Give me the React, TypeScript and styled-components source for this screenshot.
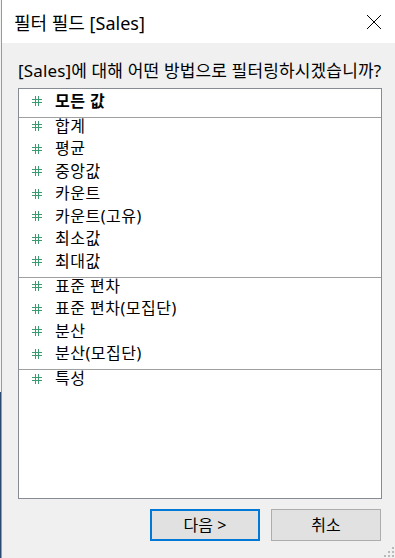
import React from 'react';
import styled, { createGlobalStyle } from 'styled-components';

const GlobalStyle = createGlobalStyle`
  html, body {
    margin: 0;
    padding: 0;
    background: #f0f0f0;
  }
  body {
    font-family: "Noto Sans", "Noto Sans CJK KR", sans-serif;
    color: #000;
  }
`;

type Aggregation = { label: string; bold?: boolean };

const groups: Aggregation[][] = [
  [{ label: '모든 값', bold: true }],
  [
    { label: '합계' },
    { label: '평균' },
    { label: '중앙값' },
    { label: '카운트' },
    { label: '카운트(고유)' },
    { label: '최소값' },
    { label: '최대값' },
  ],
  [
    { label: '표준 편차' },
    { label: '표준 편차(모집단)' },
    { label: '분산' },
    { label: '분산(모집단)' },
  ],
  [{ label: '특성' }],
];

const HashIcon: React.FC = () => (
  <HashSvg width="10" height="10" viewBox="0 0 10 10" shapeRendering="crispEdges">
    <rect x="3" y="0" width="1" height="10" fill="#3a9a70" />
    <rect x="6" y="0" width="1" height="10" fill="#3a9a70" />
    <rect x="0" y="3" width="10" height="1" fill="#3a9a70" />
    <rect x="0" y="6" width="10" height="1" fill="#3a9a70" />
  </HashSvg>
);

const CloseIcon: React.FC = () => (
  <svg width="16" height="16" viewBox="0 0 16 16">
    <path d="M1 1L15 15M15 1L1 15" stroke="#000" strokeWidth="1" fill="none" />
  </svg>
);

const Grip: React.FC = () => (
  <GripSvg width="10" height="10" viewBox="0 0 10 10">
    <rect x="8" y="0" width="2" height="2" fill="#b9b9b9" />
    <rect x="4" y="4" width="2" height="2" fill="#b9b9b9" />
    <rect x="8" y="4" width="2" height="2" fill="#b9b9b9" />
    <rect x="0" y="8" width="2" height="2" fill="#b9b9b9" />
    <rect x="4" y="8" width="2" height="2" fill="#b9b9b9" />
    <rect x="8" y="8" width="2" height="2" fill="#b9b9b9" />
  </GripSvg>
);

const App: React.FC = () => {
  return (
    <>
      <GlobalStyle />
      <Screen>
        <EdgeStrip />
        <Dialog>
          <TitleBar>
            <Title>필터 필드 [Sales]</Title>
            <CloseButton>
              <CloseIcon />
            </CloseButton>
          </TitleBar>
          <Body>
            <Prompt>[Sales]에 대해 어떤 방법으로 필터링하시겠습니까?</Prompt>
            <ListBox>
              {groups.map((group, gi) => (
                <Group key={gi} first={gi === 0}>
                  {group.map((item) => (
                    <Row key={item.label}>
                      <HashIcon />
                      <RowLabel bold={item.bold}>{item.label}</RowLabel>
                    </Row>
                  ))}
                </Group>
              ))}
            </ListBox>
            <Footer>
              <Button primary>다음 &gt;</Button>
              <Button>취소</Button>
            </Footer>
          </Body>
          <Grip />
        </Dialog>
      </Screen>
    </>
  );
};

const Screen = styled.div`
  display: flex;
  width: 395px;
  height: 558px;
  overflow: hidden;
`;

const EdgeStrip = styled.div`
  width: 1px;
  flex-shrink: 0;
  background: linear-gradient(to bottom, #f3f3f3 0, #f3f3f3 392px, #2c4a70 392px);
`;

const Dialog = styled.div`
  position: relative;
  flex: 1;
  display: flex;
  flex-direction: column;
  border-left: 1px solid #9a9a9a;
`;

const TitleBar = styled.div`
  height: 43px;
  flex-shrink: 0;
  display: flex;
  align-items: center;
  justify-content: space-between;
  padding: 0 13px 0 12px;
  background: #fff;
`;

const Title = styled.div`
  font-size: 18px;
  line-height: 22px;
  margin-top: 2px;
`;

const CloseButton = styled.div`
  display: flex;
  align-items: center;
`;

const Body = styled.div`
  flex: 1;
  display: flex;
  flex-direction: column;
  padding: 0 13px 0 16px;
  background: #f0f0f0;
`;

const Prompt = styled.div`
  margin-top: 17px;
  height: 21px;
  font-size: 17px;
  line-height: 21px;
  letter-spacing: 0.15px;
  white-space: nowrap;
  margin-bottom: 7px;
`;

const ListBox = styled.div`
  height: 411px;
  box-sizing: border-box;
  border: 1px solid #878b93;
  background: #fff;
  padding-top: 3.5px;
`;

const Group = styled.div<{ first?: boolean }>`
  border-top: ${({ first }) => (first ? 'none' : '1px solid #a0a0a0')};
  margin-top: ${({ first }) => (first ? '0' : '1.5px')};
`;

const Row = styled.div`
  height: 22.5px;
  display: flex;
  align-items: flex-start;
  padding-left: 13px;
  gap: 13px;
`;

const HashSvg = styled.svg`
  flex-shrink: 0;
  margin-top: 3.5px;
`;

const RowLabel = styled.span<{ bold?: boolean }>`
  font-size: 16px;
  line-height: 17px;
  letter-spacing: 0.5px;
  font-weight: ${({ bold }) => (bold ? 700 : 400)};
  white-space: nowrap;
`;

const Footer = styled.div`
  display: flex;
  justify-content: flex-end;
  gap: 11px;
  margin-top: 10px;
  padding-right: 1px;
`;

const Button = styled.div<{ primary?: boolean }>`
  width: 110px;
  height: 32px;
  box-sizing: border-box;
  display: flex;
  align-items: center;
  justify-content: center;
  background: #e1e1e1;
  border: ${({ primary }) => (primary ? '2px solid #0078d7' : '1px solid #adadad')};
  font-size: 16px;
  line-height: 20px;
`;

const GripSvg = styled.svg`
  position: absolute;
  right: 1px;
  bottom: 1px;
`;

export default App;
